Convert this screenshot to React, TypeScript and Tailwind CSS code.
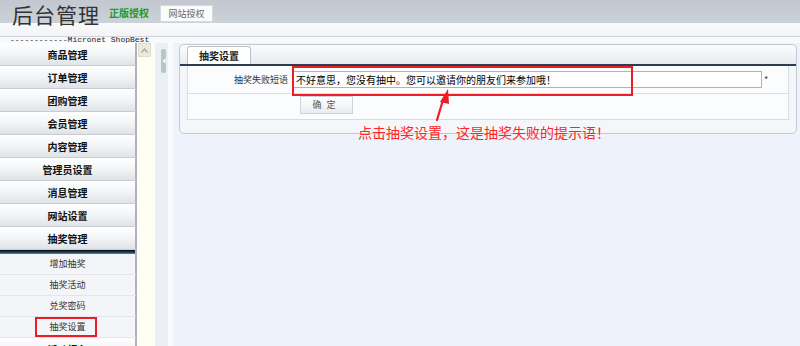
const menus = ['商品管理', '订单管理', '团购管理', '会员管理', '内容管理', '管理员设置', '消息管理', '网站设置', '抽奖管理'];
const subs = ['增加抽奖', '抽奖活动', '兑奖密码', '抽奖设置'];

function MenuButton({ label }: { label: string }) {
  return (
    <div className="flex h-[23px] shrink-0 items-center justify-center border-b border-r-2 border-b-[#c9cdd2] border-r-[#aeb3ba] bg-[linear-gradient(to_bottom,#ffffff,#f1f3f5_55%,#dfe3e7)] text-[10px] font-bold text-[#111]">
      {label}
    </div>
  );
}

export default function App() {
  return (
    <div className="relative h-[346px] w-[800px] overflow-hidden bg-[#eef2fb] font-['Noto_Sans_CJK_SC',sans-serif] text-[#333]">
      {/* Header */}
      <div className="flex h-[37px] items-start border-b border-[#d0d4d9] bg-[linear-gradient(to_bottom,#c3c7cf_0px,#cbd2d8_23px,#f9fafc_23px,#f2f4f7_36px)] pl-[12px]">
        <div className="mt-[2px] text-[21px] leading-[24px] tracking-[1px] text-[#333]">后台管理</div>
        <div className="ml-[9px] mt-[7px] text-[10px] font-bold leading-[12px] text-[#1f9a1f]">正版授权</div>
        <div className="ml-[11px] mt-[5px] flex h-[17px] w-[53px] items-center justify-center border border-[#d6d9dd] bg-[#fbfbfc] text-[9px] text-[#666]">
          网站授权
        </div>
      </div>

      {/* Micronet strip */}
      <div className="h-[6px] bg-[#f8f9fb] pl-[10px] font-['Liberation_Mono',monospace] text-[8px] leading-[6px] text-[#222]">
        ------------Micronet ShopBest
      </div>

      {/* Body */}
      <div className="flex h-[303px]">
        {/* Sidebar */}
        <div className="flex w-[137px] shrink-0 flex-col">
          {menus.map((m) => (
            <MenuButton key={m} label={m} />
          ))}
          <div className="h-[4px] shrink-0 border-r-2 border-r-[#aeb3ba] bg-[linear-gradient(to_bottom,#0d0d0d,#1b3347_50%,#4a8fb8)]" />
          {subs.map((s) => (
            <div
              key={s}
              className="flex h-[21px] shrink-0 items-center justify-center border-b border-r-2 border-b-[#e2e5e9] border-r-[#aeb3ba] bg-[#f4f5f8] text-[9px] text-[#333]"
            >
              {s}
            </div>
          ))}
          <MenuButton label="活动报名" />
        </div>

        {/* Scroll column */}
        <div className="w-[18px] shrink-0 bg-[#fffef5] pl-[1px]">
          <div className="flex h-[14px] w-[13px] items-center justify-center border border-[#e0ddcc] bg-[#ece9dc]">
            <svg width="7" height="5" viewBox="0 0 7 5">
              <path d="M0.5 4.5 L3.5 1 L6.5 4.5" fill="none" stroke="#a8a8a0" strokeWidth="1.3" />
            </svg>
          </div>
        </div>

        {/* Splitter */}
        <div className="w-[13px] shrink-0 bg-[#eceff8] pl-[6px] pt-[6px]">
          <div className="flex h-[24px] w-[5px] items-center justify-center rounded-[2px] bg-[#b6c9bd]">
            <svg width="4" height="6" viewBox="0 0 4 6">
              <path d="M3.5 0.5 L0.5 3 L3.5 5.5 Z" fill="#ffffff" />
            </svg>
          </div>
        </div>
        <div className="w-[5px] shrink-0 bg-[#fafbfe]" />

        {/* Content */}
        <div className="flex-1 pl-[6px] pr-[3px] pt-[1px]">
          <div className="h-[90px] rounded-[5px] border border-[#c3c9d1] bg-[#f4f6f9]">
            <div className="flex h-[19px] items-end rounded-t-[5px] bg-[linear-gradient(to_bottom,#fbfcfd,#e8ebef)] pl-[7px]">
              <div className="flex h-[18px] w-[64px] items-center justify-center rounded-t-[3px] border border-b-0 border-[#b9c0c8] bg-white text-[10px] font-bold text-[#222]">
                抽奖设置
              </div>
            </div>
            <div className="h-[2px] bg-[#2d3c4e]" />
            <div className="px-[7px]">
              <div className="border-x border-b border-[#d8dce1] bg-[#fbfcfd]">
                <div className="flex h-[28px] items-center border-b border-[#dcdfe3]">
                  <div className="w-[105px] pr-[5px] text-right text-[9px] text-[#333]">抽奖失败短语</div>
                  <div className="flex h-[17px] w-[469px] items-center border border-[#a3b6cd] bg-white px-[2px] text-[10px] text-[#000]">
                    不好意思，您没有抽中。您可以邀请你的朋友们来参加哦！
                  </div>
                  <div className="ml-[2px] text-[9px] text-[#333]">*</div>
                </div>
                <div className="flex h-[25px] items-start pl-[112px] pt-[2px]">
                  <div className="flex h-[18px] w-[53px] items-center justify-center border border-[#cfd3d8] bg-[linear-gradient(to_bottom,#ffffff,#e9ecef)] text-[9px] tracking-[5px] text-[#555]">
                    确定
                  </div>
                </div>
              </div>
            </div>
          </div>
        </div>
      </div>

      {/* Annotations */}
      <div className="absolute left-[292px] top-[66px] h-[30px] w-[341px] border-2 border-[#ee1c24]" />
      <div className="absolute left-[35px] top-[317px] h-[20px] w-[62px] border-2 border-[#ee1c24]" />
      <div className="absolute left-[358px] top-[123px] whitespace-nowrap text-[14px] leading-[18px] text-[#ff2626]">
        点击抽奖设置，这是抽奖失败的提示语！
      </div>
      <svg className="absolute left-[430px] top-[85px]" width="24" height="38" viewBox="0 0 24 38">
        <path d="M7 35 L13 15" stroke="#ee1c24" strokeWidth="2.2" strokeLinecap="round" />
        <path d="M18 4 L10 17 L19 19 Z" fill="#ee1c24" />
      </svg>
    </div>
  );
}
